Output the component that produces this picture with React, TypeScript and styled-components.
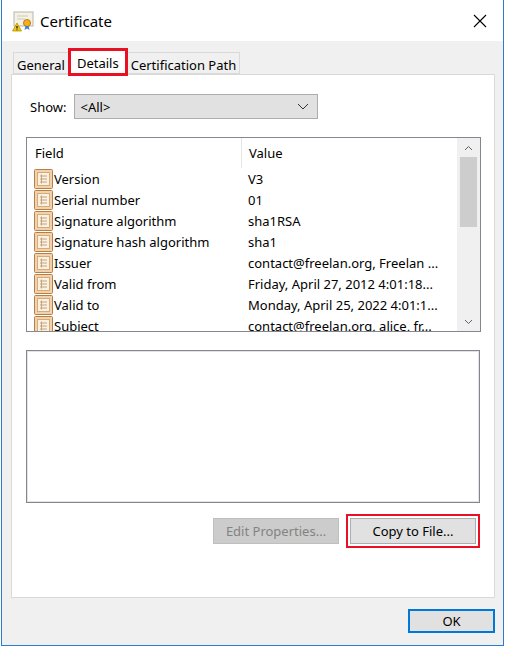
import React from "react";
import styled, { createGlobalStyle } from "styled-components";

const Global = createGlobalStyle`
  body { margin: 0; background: #fff; font-family: "Segoe UI", "Noto Sans", "DejaVu Sans", sans-serif; font-size: 12px; color: #000; }
`;

const Window = styled.div`
  box-sizing: border-box;
  margin-left: 1px;
  width: 503px;
  height: 646px;
  border: 1px solid #2b7ccf;
  border-top: none;
  background: #f0f0f0;
  display: flex;
  flex-direction: column;
`;
const TitleBar = styled.div`
  height: 41px;
  background: #fff;
  display: flex;
  align-items: center;
  padding: 0 0 0 10px;
  font-size: 15px;
  gap: 6px;
`;
const Title = styled.div`flex: 1;`;
const Close = styled.div`
  width: 46px;
  display: flex;
  justify-content: center;
`;
const Body = styled.div`
  flex: 1;
  padding: 7px 8px 0 9px;
  display: flex;
  flex-direction: column;
`;
const Tabs = styled.div`
  display: flex;
  align-items: flex-end;
  height: 26px;
  padding-left: 2px;
`;
const Tab = styled.div<{ $active?: boolean; $outlined?: boolean }>`
  box-sizing: border-box;
  height: ${(p) => (p.$active ? "26px" : "22px")};
  padding: ${(p) => (p.$active ? "4px 7px 0" : "3px 3px 0")};
  background: ${(p) => (p.$active ? "#fff" : "#f0f0f0")};
  border: 1px solid #d9d9d9;
  border-bottom: ${(p) => (p.$active ? "none" : "1px solid #d9d9d9")};
  margin-bottom: ${(p) => (p.$active ? "-1px" : "0")};
  position: relative;
  z-index: ${(p) => (p.$active ? 1 : 0)};
  font-size: 13px;
  outline: ${(p) => (p.$outlined ? "3px solid #e81123" : "none")};
  outline-offset: -2px;
`;
const Panel = styled.div`
  box-sizing: border-box;
  height: 524px;
  background: #fff;
  border: 1px solid #d9d9d9;
  padding: 19px 15px 0 14px;
  display: flex;
  flex-direction: column;
`;
const ShowRow = styled.div`
  display: flex;
  align-items: center;
  gap: 8px;
  font-size: 13px;
  padding-left: 4px;
`;
const Select = styled.div`
  box-sizing: border-box;
  width: 244px;
  height: 25px;
  background: #e1e1e1;
  border: 1px solid #adadad;
  display: flex;
  align-items: center;
  justify-content: space-between;
  padding: 0 8px 0 5px;
  font-size: 13px;
`;
const ListBox = styled.div`
  margin-top: 18px;
  box-sizing: border-box;
  width: 455px;
  height: 195px;
  border: 1px solid #828790;
  display: flex;
  overflow: hidden;
`;
const ListMain = styled.div`flex: 1; overflow: hidden;`;
const Header = styled.div`
  display: grid;
  grid-template-columns: 214px 1fr;
  height: 30px;
  align-items: center;
  font-size: 13px;
`;
const HeadCell = styled.div<{ $sep?: boolean }>`
  padding-left: ${(p) => (p.$sep ? "7px" : "8px")};
  border-left: ${(p) => (p.$sep ? "1px solid #e5e5e5" : "none")};
  height: 100%;
  display: flex;
  align-items: center;
`;
const Row = styled.div`
  display: grid;
  grid-template-columns: 214px 1fr;
  height: 21px;
  align-items: center;
  font-size: 13px;
  white-space: nowrap;
`;
const FieldCell = styled.div`
  display: flex;
  align-items: center;
  gap: 1px;
  padding-left: 7px;
`;
const ValueCell = styled.div`padding-left: 7px; overflow: hidden;`;
const Scroll = styled.div`
  width: 23px;
  background: #f0f0f0;
  display: flex;
  flex-direction: column;
  align-items: center;
`;
const Arrow = styled.div`height: 19px; display: flex; align-items: center; justify-content: center;`;
const Thumb = styled.div`width: 17px; height: 70px; background: #cdcdcd;`;
const Spacer = styled.div`flex: 1;`;
const TextArea = styled.div`
  margin-top: 18px;
  box-sizing: border-box;
  width: 454px;
  height: 153px;
  border: 1px solid #828790;
  box-shadow: inset 0 0 0 1px #e3e3e3;
`;
const Buttons = styled.div`
  display: flex;
  justify-content: flex-end;
  gap: 11px;
  margin-top: 15px;
  padding-right: 3px;
`;
const Button = styled.div<{ $disabled?: boolean; $outlined?: boolean; $default?: boolean }>`
  box-sizing: border-box;
  width: ${(p) => (p.$default ? "87px" : "126px")};
  height: ${(p) => (p.$default ? "24px" : "26px")};
  background: ${(p) => (p.$disabled ? "#cccccc" : "#e1e1e1")};
  color: ${(p) => (p.$disabled ? "#838383" : "#000")};
  border: ${(p) => (p.$default ? "2px solid #0078d7" : p.$disabled ? "1px solid #bfbfbf" : "1px solid #adadad")};
  display: flex;
  align-items: center;
  justify-content: center;
  font-size: 13px;
  outline: ${(p) => (p.$outlined ? "2px solid #e81123" : "none")};
  outline-offset: 2px;
`;
const Footer = styled.div`
  display: flex;
  justify-content: flex-end;
  padding: 11px 0 0;
`;

const FieldIcon = () => (
  <svg width="19" height="20" viewBox="0 0 19 20">
    <rect x="0.5" y="0.5" width="18" height="19" rx="1" fill="#f1d2ad" stroke="#b57f45" />
    <rect x="3.5" y="3.5" width="12" height="13" fill="#fbf1e3" stroke="#d7ab79" />
    <path d="M6 7h7M6 10h7M6 13h7M7.5 5.5v9" stroke="#c8a27a" strokeWidth="1" />
  </svg>
);

const CertIcon = () => (
  <svg width="22" height="22" viewBox="0 0 22 22">
    <rect x="2" y="2" width="19" height="14" fill="#f4f1e6" stroke="#b9b6a8" />
    <path d="M5 6h11M5 9h8" stroke="#cfcbbb" />
    <circle cx="15" cy="13" r="3.5" fill="#f0b020" stroke="#c07a10" />
    <path d="M13.5 16l-1 4 2.5-1.5 2.5 1.5-1-4" fill="#3b7fd0" />
    <path d="M5 13l4.5 8h-9z" fill="#f2c811" stroke="#a98a00" strokeWidth="0.7" />
    <path d="M5 16v2.5M5 19.5v0.7" stroke="#000" strokeWidth="1.1" />
  </svg>
);

const rows: [string, string][] = [
  ["Version", "V3"],
  ["Serial number", "01"],
  ["Signature algorithm", "sha1RSA"],
  ["Signature hash algorithm", "sha1"],
  ["Issuer", "contact@freelan.org, Freelan ..."],
  ["Valid from", "Friday, April 27, 2012 4:01:18..."],
  ["Valid to", "Monday, April 25, 2022 4:01:1..."],
  ["Subject", "contact@freelan.org, alice, fr..."],
];

export default function App() {
  return (
    <>
      <Global />
      <Window>
        <TitleBar>
          <CertIcon />
          <Title>Certificate</Title>
          <Close>
            <svg width="14" height="14" viewBox="0 0 14 14">
              <path d="M1 1l12 12M13 1L1 13" stroke="#000" strokeWidth="1.1" />
            </svg>
          </Close>
        </TitleBar>
        <Body>
          <Tabs>
            <Tab>General</Tab>
            <Tab $active $outlined>Details</Tab>
            <Tab>Certification Path</Tab>
          </Tabs>
          <Panel>
            <ShowRow>
              <span>Show:</span>
              <Select>
                <span>&lt;All&gt;</span>
                <svg width="12" height="7" viewBox="0 0 12 7">
                  <path d="M1 1l5 5 5-5" fill="none" stroke="#333" />
                </svg>
              </Select>
            </ShowRow>
            <ListBox>
              <ListMain>
                <Header>
                  <HeadCell>Field</HeadCell>
                  <HeadCell $sep>Value</HeadCell>
                </Header>
                {rows.map(([f, v]) => (
                  <Row key={f}>
                    <FieldCell>
                      <FieldIcon />
                      {f}
                    </FieldCell>
                    <ValueCell>{v}</ValueCell>
                  </Row>
                ))}
              </ListMain>
              <Scroll>
                <Arrow>
                  <svg width="9" height="6" viewBox="0 0 9 6"><path d="M1 5l3.5-3.5L8 5" fill="none" stroke="#606060" /></svg>
                </Arrow>
                <Thumb />
                <Spacer />
                <Arrow>
                  <svg width="9" height="6" viewBox="0 0 9 6"><path d="M1 1l3.5 3.5L8 1" fill="none" stroke="#606060" /></svg>
                </Arrow>
              </Scroll>
            </ListBox>
            <TextArea />
            <Buttons>
              <Button $disabled>Edit Properties...</Button>
              <Button $outlined>Copy to File...</Button>
            </Buttons>
          </Panel>
          <Footer>
            <Button $default>OK</Button>
          </Footer>
        </Body>
      </Window>
    </>
  );
}
